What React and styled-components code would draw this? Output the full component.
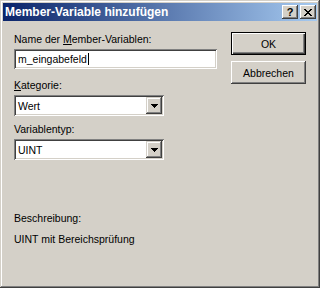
import React from 'react';
import styled, { createGlobalStyle } from 'styled-components';

const GlobalStyle = createGlobalStyle`
	html, body {
		margin: 0;
		padding: 0;
		background: #d4d0c8;
	}
	body {
		font-family: "Liberation Sans", Arial, sans-serif;
	}
`;

const Window = styled.div`
	width: 320px;
	height: 288px;
	box-sizing: border-box;
	padding: 3px;
	display: flex;
	flex-direction: column;
	background: #d4d0c8;
	box-shadow: inset -1px -1px #404040, inset 1px 1px #d4d0c8,
		inset -2px -2px #808080, inset 2px 2px #ffffff;
	font-family: "Liberation Sans", Arial, sans-serif;
	font-size: 10.5px;
	color: #000;
`;

const TitleBar = styled.div`
	height: 18px;
	display: flex;
	align-items: center;
	gap: 2px;
	padding-right: 1px;
	background: linear-gradient(to right, #0a246a, #a6caf0);
`;

const Title = styled.span`
	flex: 1;
	padding-left: 2px;
	color: #fff;
	font-weight: bold;
	font-size: 12px;
	line-height: 18px;
	white-space: nowrap;
`;

const CaptionButton = styled.div`
	width: 16px;
	height: 14px;
	box-sizing: border-box;
	display: flex;
	align-items: center;
	justify-content: center;
	background: #d4d0c8;
	box-shadow: inset -1px -1px #404040, inset 1px 1px #ffffff,
		inset -2px -2px #808080, inset 2px 2px #d4d0c8;
	font-weight: bold;
	font-size: 11px;
	line-height: 14px;
	color: #000;
`;

const Client = styled.div`
	flex: 1;
	display: flex;
	padding: 11px 11px 0 11px;
`;

const Fields = styled.div`
	flex: 1;
	display: flex;
	flex-direction: column;
	padding-top: 1px;
`;

const Label = styled.div`
	height: 13px;
	line-height: 13px;
	margin-top: ${p => p.$top || 0}px;
	margin-bottom: 3px;
	white-space: nowrap;
	u {
		text-decoration: underline;
		text-underline-offset: 1px;
	}
`;

const Sunken = styled.div`
	box-sizing: border-box;
	background: #fff;
	box-shadow: inset 1px 1px #808080, inset -1px -1px #ffffff,
		inset 2px 2px #404040, inset -2px -2px #d4d0c8;
	display: flex;
	align-items: center;
`;

const Edit = styled(Sunken)`
	width: 203px;
	height: 20px;
	padding-left: 4px;
`;

const Caret = styled.span`
	display: inline-block;
	width: 1px;
	height: 12px;
	margin-left: 1px;
	background: #000;
`;

const Combo = styled(Sunken)`
	width: 150px;
	height: 21px;
	padding: 2px;
`;

const ComboText = styled.span`
	flex: 1;
	padding-left: 2px;
`;

const DropButton = styled.div`
	width: 16px;
	height: 17px;
	box-sizing: border-box;
	display: flex;
	align-items: center;
	justify-content: center;
	background: #d4d0c8;
	box-shadow: inset -1px -1px #404040, inset 1px 1px #d4d0c8,
		inset -2px -2px #808080, inset 2px 2px #ffffff;
`;

const Buttons = styled.div`
	width: 75px;
	display: flex;
	flex-direction: column;
	gap: 6px;
`;

const PushButton = styled.div`
	width: 75px;
	height: 23px;
	box-sizing: border-box;
	display: flex;
	align-items: center;
	justify-content: center;
	background: #d4d0c8;
	box-shadow: ${p =>
		p.$default
			? 'inset 1px 1px #000, inset -1px -1px #000, inset 2px 2px #ffffff, inset -2px -2px #404040, inset -3px -3px #808080'
			: 'inset -1px -1px #404040, inset 1px 1px #ffffff, inset -2px -2px #808080, inset 2px 2px #d4d0c8'};
`;

const Arrow = () => (
	<svg width="7" height="4" viewBox="0 0 7 4" shapeRendering="crispEdges">
		<path d="M0 0h7v1H0zM1 1h5v1H1zM2 2h3v1H2zM3 3h1v1H3z" fill="#000" />
	</svg>
);

const CloseGlyph = () => (
	<svg width="8" height="7" viewBox="0 0 8 7" shapeRendering="crispEdges">
		<path
			d="M0 0h2v1H0zM6 0h2v1H6zM1 1h2v1H1zM5 1h2v1H5zM2 2h4v1H2zM3 3h2v1H3zM2 4h4v1H2zM1 5h2v1H1zM5 5h2v1H5zM0 6h2v1H0zM6 6h2v1H6z"
			fill="#000"
		/>
	</svg>
);

const ComboBox = ({ value }) => (
	<Combo>
		<ComboText>{value}</ComboText>
		<DropButton>
			<Arrow />
		</DropButton>
	</Combo>
);

export default function App() {
	return (
		<>
			<GlobalStyle />
			<Window>
				<TitleBar>
					<Title>Member-Variable hinzufügen</Title>
					<CaptionButton>?</CaptionButton>
					<CaptionButton>
						<CloseGlyph />
					</CaptionButton>
				</TitleBar>
				<Client>
					<Fields>
						<Label>
							Name der <u>M</u>ember-Variablen:
						</Label>
						<Edit>
							m_eingabefeld
							<Caret />
						</Edit>
						<Label $top={10}>
							<u>K</u>ategorie:
						</Label>
						<ComboBox value="Wert" />
						<Label $top={7}>Variablentyp:</Label>
						<ComboBox value="UINT" />
						<Label $top={52}>Beschreibung:</Label>
						<Label $top={5}>UINT mit Bereichsprüfung</Label>
					</Fields>
					<Buttons>
						<PushButton $default>OK</PushButton>
						<PushButton>Abbrechen</PushButton>
					</Buttons>
				</Client>
			</Window>
		</>
	);
}
